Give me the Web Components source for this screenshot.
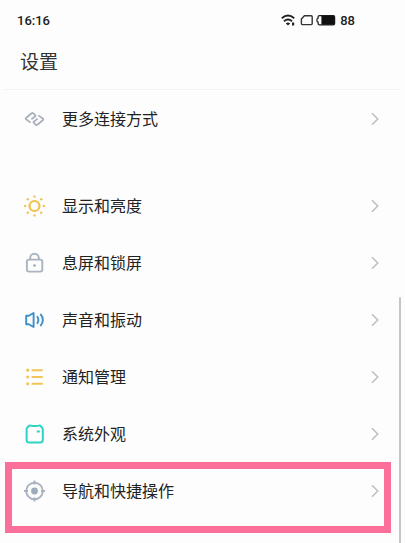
<!DOCTYPE html>
<html lang="zh-CN">
<head>
<meta charset="utf-8">
<meta name="viewport" content="width=device-width, initial-scale=1">
<title>设置</title>
<style>
  body {
    margin: 0;
    background: #fdfdfd;
    color: #222;
    font-family: Roboto, "Noto Sans CJK SC", sans-serif;
  }
</style>
</head>
<body>

<settings-screen>
  <status-bar slot="status" time="16:16" battery="88"></status-bar>
  <page-header slot="header">设置</page-header>
  <settings-group>
    <settings-item icon="link">更多连接方式</settings-item>
  </settings-group>
  <settings-group>
    <settings-item icon="sun">显示和亮度</settings-item>
    <settings-item icon="lock">息屏和锁屏</settings-item>
    <settings-item icon="sound">声音和振动</settings-item>
    <settings-item icon="list">通知管理</settings-item>
    <settings-item icon="theme">系统外观</settings-item>
    <settings-item icon="target" highlighted>导航和快捷操作</settings-item>
  </settings-group>
</settings-screen>

<script>
const icons = {
  link: `<g stroke="#aab1bc" stroke-width="1.8">
    <path d="M6.6 15.6 2 12.2Q1.4 11.6 2 11L7.6 6.2Q8.4 5.6 9.2 6.3L11.2 8.1Q11.8 8.7 11.2 9.3L7.4 12.4"/>
    <path d="M14.4 8.4 19 11.8Q19.6 12.4 19 13L13.4 17.8Q12.6 18.4 11.8 17.7L9.8 15.9Q9.2 15.3 9.8 14.7L13.6 11.6"/>
  </g>`,
  sun: `<circle cx="10.5" cy="12" r="5" stroke="#f2c04c" stroke-width="2.2"/>
    <g fill="#f0c05a">
      <circle cx="10.5" cy="2.6" r="1.2"/><circle cx="17.2" cy="5.3" r="1.2"/>
      <circle cx="19.9" cy="12" r="1.2"/><circle cx="17.2" cy="18.7" r="1.2"/>
      <circle cx="10.5" cy="21.4" r="1.2"/><circle cx="3.8" cy="18.7" r="1.2"/>
      <circle cx="1.1" cy="12" r="1.2"/><circle cx="3.8" cy="5.3" r="1.2"/>
    </g>`,
  lock: `<g stroke="#aab3c0" stroke-width="1.9">
    <rect x="2.9" y="8.6" width="15.4" height="12" rx="2"/>
    <path d="M6.2 8.6V7a4.3 4.3 0 0 1 8.6 0v1.6"/>
  </g><circle cx="10.5" cy="14.5" r="1.3" fill="#9ba7b8"/>`,
  sound: `<g stroke="#3d8fc8" stroke-width="1.9">
    <path d="M2.2 7.8h2.6l4.8-2.8v14l-4.8-2.8H2.2z"/>
    <path d="M13 8.2q2.8 3.8 0 7.6M16.4 5.9q5 6.1 0 12.2"/>
  </g>`,
  list: `<g fill="#efc65b">
    <circle cx="3.7" cy="5.2" r="1.6"/><circle cx="3.7" cy="12" r="1.6"/><circle cx="3.7" cy="18.8" r="1.6"/>
  </g>
  <path stroke="#efc65b" stroke-width="2" d="M7.6 5.2h11.2M7.6 12h11.2M7.6 18.8h11.2"/>`,
  theme: `<g stroke="#2ed3c4" stroke-width="2">
    <path d="M4.6 4.2Q5.4 3 6.8 3.6Q10.7 4.6 14.6 3.6Q16 3 16.8 4.2L18.3 5.8Q18.8 6.4 18.8 7.4V18q0 2.6-2.6 2.6H5.2Q2.6 20.6 2.6 18V7.4q0-1 .5-1.6z"/>
    <path d="M12.8 9.5h3"/>
  </g>`,
  target: `<g stroke="#a9b2bf" stroke-width="1.9">
    <circle cx="10.5" cy="12" r="8.3"/>
    <path d="M10.5 1.4v4M10.5 18.6v4M0 12h4M17 12h4"/>
  </g><circle cx="10.5" cy="12" r="3.4" fill="#9eabbd"/>`
};

class SettingsScreen extends HTMLElement {
  constructor() {
    super();
    this.attachShadow({ mode: 'open' });
    this.shadowRoot.innerHTML = `
      <style>
        :host {
          display: block;
          position: relative;
          min-height: 100vh;
          overflow: hidden;
        }

        main {
          display: flex;
          flex-direction: column;
          gap: 30px;
        }

        .scrollbar {
          position: absolute;
          top: 297px;
          right: 4px;
          bottom: 0;
          width: 2px;
          border-radius: 1px 1px 0 0;
          background: #c6c6c9;
        }
      </style>
      <slot name="status"></slot>
      <slot name="header"></slot>
      <main><slot></slot></main>
      <div class="scrollbar"></div>
    `;
  }
}

class StatusBar extends HTMLElement {
  constructor() {
    super();
    this.attachShadow({ mode: 'open' });
    this.shadowRoot.innerHTML = `
      <style>
        :host {
          display: flex;
          align-items: center;
          justify-content: space-between;
          height: 40px;
          padding: 0 50px 0 17px;
          font-size: 13px;
          font-weight: 500;
          color: #202020;
        }

        .indicators {
          display: flex;
          align-items: center;
          gap: 4px;
        }

        svg {
          display: block;
        }
      </style>
      <time>${this.getAttribute('time')}</time>
      <div class="indicators">
        <svg width="56" height="14" viewBox="0 0 56 14" fill="none" aria-hidden="true">
          <g stroke="#222" stroke-width="1.9">
            <path d="M1.8 5.2q6.2-5.2 12.4 0M4 8.2q4-3.3 8 0"/>
          </g>
          <path d="M5.8 10.4q2.2-1.6 4.4 0L8 12.6zM12 9.4h2.2v3.2H12z" fill="#222"/>
          <path d="M24.4 2.8h6.8q1 0 1 1v6.8q0 1-1 1h-8.8q-1 0-1-1V6z" stroke="#333" stroke-width="1.4"/>
          <path d="M39.5 2.6h13.7q1.4 0 1.4 1.4v6.4q0 1.4-1.4 1.4H39.5q-1.4 0-1.4-1.4V9.2q-1.2 0-1.2-2t1.2-2V4q0-1.4 1.4-1.4z" stroke="#222" stroke-width="1.3"/>
          <path d="M41.4 2.6h13v9.2h-13z" fill="#111"/>
        </svg>
        <span>${this.getAttribute('battery')}</span>
      </div>
    `;
  }
}

class PageHeader extends HTMLElement {
  constructor() {
    super();
    this.attachShadow({ mode: 'open' });
    this.shadowRoot.innerHTML = `
      <style>
        :host {
          display: block;
          margin: 0 4px;
          padding: 9px 16px 12px;
          border-bottom: 1px solid #f2f2f2;
        }

        h1 {
          margin: 0;
          color: #333;
          font-size: 19px;
          font-weight: 400;
          line-height: 28px;
        }
      </style>
      <h1><slot></slot></h1>
    `;
  }
}

class SettingsGroup extends HTMLElement {
  constructor() {
    super();
    this.attachShadow({ mode: 'open' });
    this.shadowRoot.innerHTML = `
      <style>
        :host {
          display: flex;
          flex-direction: column;
        }
      </style>
      <slot></slot>
    `;
  }
}

class SettingsItem extends HTMLElement {
  constructor() {
    super();
    this.attachShadow({ mode: 'open' });
    this.shadowRoot.innerHTML = `
      <style>
        :host {
          display: block;
          position: relative;
        }

        button {
          display: flex;
          align-items: center;
          gap: 16px;
          width: 100%;
          height: 57px;
          padding: 0 24px;
          border: none;
          background: none;
          color: inherit;
          font: inherit;
          font-size: 16px;
          text-align: left;
          cursor: pointer;
        }

        svg {
          flex: none;
          fill: none;
          stroke-linejoin: round;
        }

        .label {
          flex: 1;
          padding-bottom: 1px;
        }

        /* frame drawn over the row, slightly taller than it */
        :host([highlighted])::after {
          content: '';
          position: absolute;
          top: 0;
          left: 5px;
          right: 14px;
          height: 57px;
          border: 7px solid #fb6f9b;
          pointer-events: none;
        }
      </style>
      <button type="button">
        <svg width="22" height="24" viewBox="0 0 22 24" aria-hidden="true">${icons[this.getAttribute('icon')]}</svg>
        <span class="label"><slot></slot></span>
        <svg width="12" height="14" viewBox="0 0 12 14" aria-hidden="true">
          <path d="M3 1.2 8.8 7 3 12.8" stroke="#bfbfc1" stroke-width="1.6"/>
        </svg>
      </button>
    `;
  }
}

customElements.define('settings-screen', SettingsScreen);
customElements.define('status-bar', StatusBar);
customElements.define('page-header', PageHeader);
customElements.define('settings-group', SettingsGroup);
customElements.define('settings-item', SettingsItem);
</script>
</body>
</html>
